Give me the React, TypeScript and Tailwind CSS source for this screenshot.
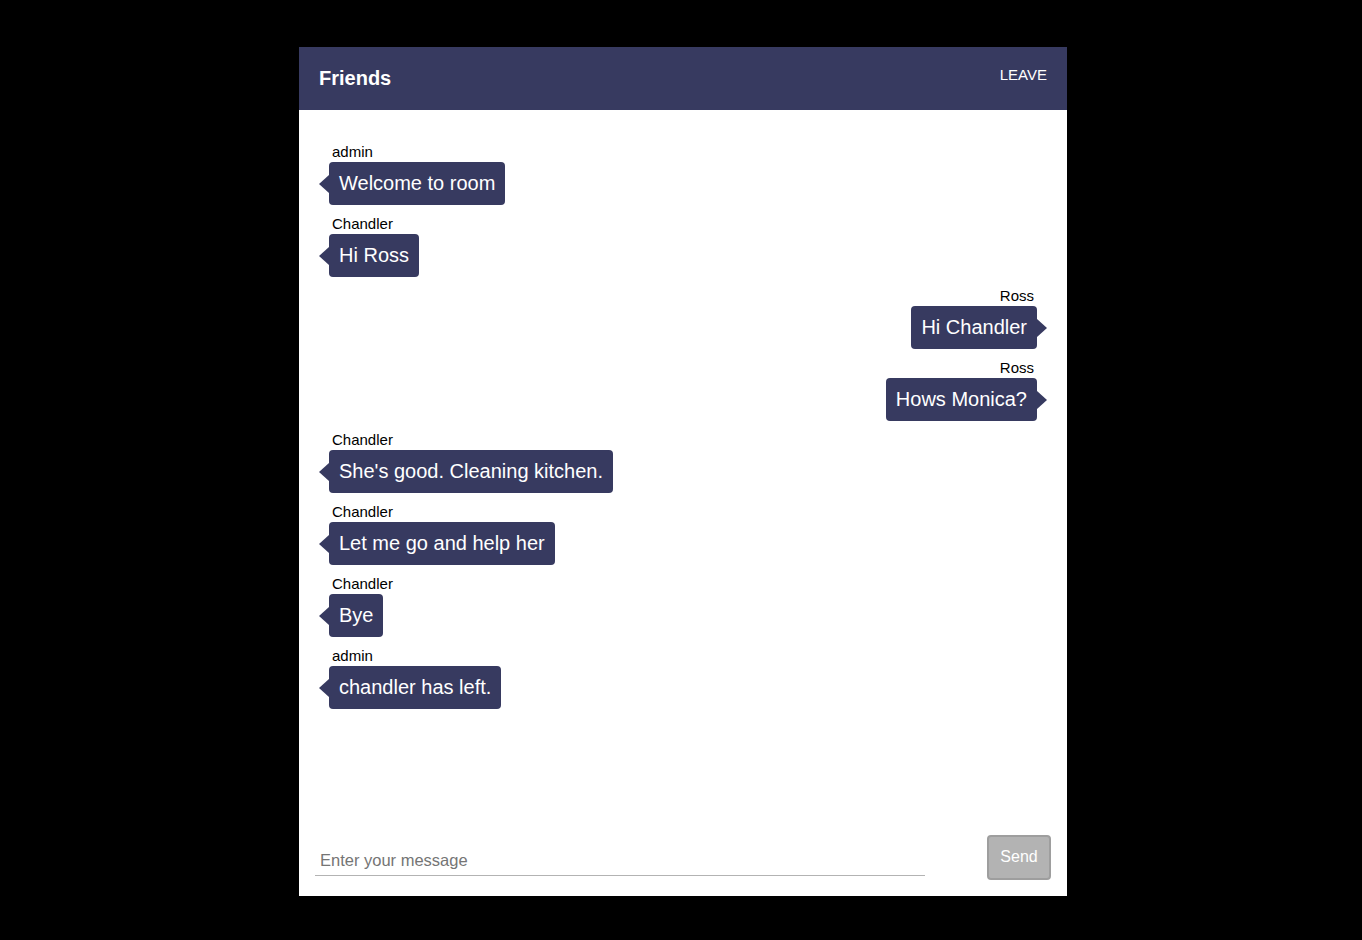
const HEADER_BG = "bg-[#373a60]";

type Message = {
  user: string;
  text: string;
  mine?: boolean;
};

const messages: Message[] = [
  { user: "admin", text: "Welcome to room" },
  { user: "Chandler", text: "Hi Ross" },
  { user: "Ross", text: "Hi Chandler", mine: true },
  { user: "Ross", text: "Hows Monica?", mine: true },
  { user: "Chandler", text: "She's good. Cleaning kitchen." },
  { user: "Chandler", text: "Let me go and help her" },
  { user: "Chandler", text: "Bye" },
  { user: "admin", text: "chandler has left." },
];

function Bubble({ msg }: { msg: Message }) {
  return (
    <div className={`flex flex-col mb-[11px] ${msg.mine ? "items-end" : "items-start"}`}>
      <span className="text-[15px] leading-[16px] mb-[2px] text-black px-[3px]">{msg.user}</span>
      <div className="relative">
        {/* pointer */}
        {msg.mine ? (
          <span className="absolute right-[-10px] top-1/2 -translate-y-1/2 w-0 h-0 border-y-[9px] border-y-transparent border-l-[10px] border-l-[#373a60]" />
        ) : (
          <span className="absolute left-[-10px] top-1/2 -translate-y-1/2 w-0 h-0 border-y-[9px] border-y-transparent border-r-[10px] border-r-[#373a60]" />
        )}
        <div className="bg-[#373a60] text-white text-[20px] leading-[23px] px-[10px] py-[10px] rounded-[4px]">
          {msg.text}
        </div>
      </div>
    </div>
  );
}

export default function App() {
  return (
    <div
      className="min-h-screen bg-black flex justify-center pl-[4px] pt-[47px]"
      style={{ fontFamily: '"Liberation Sans", Arial, sans-serif' }}
    >
      <div className="w-[768px] h-[849px] bg-white flex flex-col">
        {/* Header */}
        <div className={`${HEADER_BG} h-[63px] shrink-0 flex items-center justify-between pl-5 pr-5`}>
          <span className="text-white text-[20px] font-bold mb-[2px]">Friends</span>
          <button className="text-white text-[15px] mb-[6px]">LEAVE</button>
        </div>

        {/* Messages */}
        <div className="flex-1 overflow-hidden px-[30px] pt-[34px]">
          {messages.map((m, i) => (
            <Bubble key={i} msg={m} />
          ))}
        </div>

        {/* Composer */}
        <div className="flex items-end px-4 pb-4 shrink-0">
          <input
            className="w-[610px] h-[30px] mb-[4px] border-b border-[#b3b3b3] px-[5px] text-[16.5px] outline-none placeholder:text-[#757575]"
            placeholder="Enter your message"
          />
          <button className="ml-auto w-[64px] h-[45px] pb-[2px] bg-[#b3b3b3] border-2 border-[#9e9e9e] rounded-[4px] text-white text-[16px]">
            Send
          </button>
        </div>
      </div>
    </div>
  );
}
